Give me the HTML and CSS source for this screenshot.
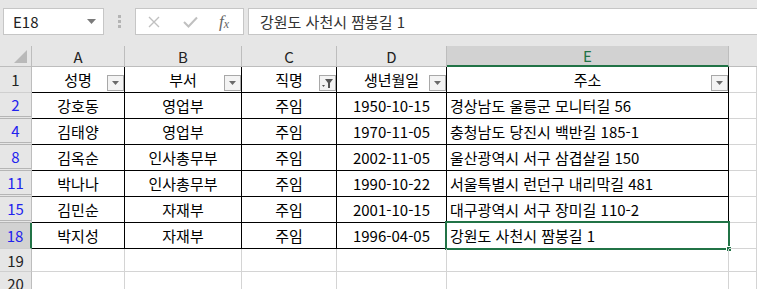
FILE: index.html
```html
<!DOCTYPE html>
<html lang="ko">

<head>
    <meta charset="UTF-8" />
    <meta name="viewport" content="width=device-width, initial-scale=1.0" />
    <title>Excel | 사원 목록</title>
    <link rel="stylesheet" href="styles.css">
</head>

<body>
    <div class="formula-bar">
        <div class="name-box">
            <span>E18</span>
            <svg class="caret" width="9" height="5" viewBox="0 0 9 5"><polygon points="0,0 9,0 4.5,5" fill="#7a7a7a" /></svg>
        </div>
        <div class="grip">
            <svg width="3" height="13" viewBox="0 0 3 13">
                <rect x="0" y="0" width="3" height="3" fill="#b4b4b4" />
                <rect x="0" y="5" width="3" height="3" fill="#b4b4b4" />
                <rect x="0" y="10" width="3" height="3" fill="#b4b4b4" />
            </svg>
        </div>
        <div class="fx-buttons">
            <svg class="btn-icon" width="12" height="12" viewBox="0 0 12 12"><path d="M1 1 L11 11 M11 1 L1 11" stroke="#c0c0c0" stroke-width="1.4" fill="none" /></svg>
            <svg class="btn-icon" width="15" height="12" viewBox="0 0 15 12"><path d="M1 6 L5.5 10.5 L14 1.5" stroke="#c0c0c0" stroke-width="2" fill="none" /></svg>
            <span class="fx">f<sub>x</sub></span>
        </div>
        <div class="formula-input">강원도 사천시 짬봉길 1</div>
    </div>

    <div class="sheet">
        <!-- column headers -->
        <div class="corner">
            <svg width="13" height="13" viewBox="0 0 13 13"><polygon points="13,0 13,13 0,13" fill="#b9b9b9" /></svg>
        </div>
        <div class="col-head">A</div>
        <div class="col-head">B</div>
        <div class="col-head">C</div>
        <div class="col-head">D</div>
        <div class="col-head active">E</div>
        <div class="col-head last"></div>

        <!-- row 1 -->
        <div class="row-head">1</div>
        <div class="cell head">성명<span class="filter"><svg width="7" height="4" viewBox="0 0 7 4"><polygon points="0,0 7,0 3.5,4" fill="#6a6a6a" /></svg></span></div>
        <div class="cell head">부서<span class="filter"><svg width="7" height="4" viewBox="0 0 7 4"><polygon points="0,0 7,0 3.5,4" fill="#6a6a6a" /></svg></span></div>
        <div class="cell head">직명<span class="filter"><svg width="11" height="10" viewBox="0 0 11 10"><polygon points="3,1 11,1 8,5 8,10 6,10 6,5" fill="#555" /><polygon points="0,7 3,7 1.5,9" fill="#555" /></svg></span></div>
        <div class="cell head">생년월일<span class="filter"><svg width="7" height="4" viewBox="0 0 7 4"><polygon points="0,0 7,0 3.5,4" fill="#6a6a6a" /></svg></span></div>
        <div class="cell head">주소<span class="filter"><svg width="7" height="4" viewBox="0 0 7 4"><polygon points="0,0 7,0 3.5,4" fill="#6a6a6a" /></svg></span></div>
        <div class="cell empty"></div>

        <!-- row 2 -->
        <div class="row-head filtered gap">2</div>
        <div class="cell">강호동</div>
        <div class="cell">영업부</div>
        <div class="cell">주임</div>
        <div class="cell">1950-10-15</div>
        <div class="cell left">경상남도 울릉군 모니터길 56</div>
        <div class="cell empty"></div>

        <!-- row 4 -->
        <div class="row-head filtered gap">4</div>
        <div class="cell">김태양</div>
        <div class="cell">영업부</div>
        <div class="cell">주임</div>
        <div class="cell">1970-11-05</div>
        <div class="cell left">충청남도 당진시 백반길 185-1</div>
        <div class="cell empty"></div>

        <!-- row 8 -->
        <div class="row-head filtered gap">8</div>
        <div class="cell">김옥순</div>
        <div class="cell">인사총무부</div>
        <div class="cell">주임</div>
        <div class="cell">2002-11-05</div>
        <div class="cell left">울산광역시 서구 삼겹살길 150</div>
        <div class="cell empty"></div>

        <!-- row 11 -->
        <div class="row-head filtered gap">11</div>
        <div class="cell">박나나</div>
        <div class="cell">인사총무부</div>
        <div class="cell">주임</div>
        <div class="cell">1990-10-22</div>
        <div class="cell left">서울특별시 런던구 내리막길 481</div>
        <div class="cell empty"></div>

        <!-- row 15 -->
        <div class="row-head filtered gap">15</div>
        <div class="cell">김민순</div>
        <div class="cell">자재부</div>
        <div class="cell">주임</div>
        <div class="cell">2001-10-15</div>
        <div class="cell left">대구광역시 서구 장미길 110-2</div>
        <div class="cell empty"></div>

        <!-- row 18 -->
        <div class="row-head filtered active">18</div>
        <div class="cell">박지성</div>
        <div class="cell">자재부</div>
        <div class="cell">주임</div>
        <div class="cell">1996-04-05</div>
        <div class="cell left selected">강원도 사천시 짬봉길 1<span class="selection"><span class="handle"></span></span></div>
        <div class="cell empty"></div>

        <!-- row 19 -->
        <div class="row-head">19</div>
        <div class="cell empty"></div>
        <div class="cell empty"></div>
        <div class="cell empty"></div>
        <div class="cell empty"></div>
        <div class="cell empty"></div>
        <div class="cell empty"></div>

        <!-- row 20 -->
        <div class="row-head">20</div>
        <div class="cell empty"></div>
        <div class="cell empty"></div>
        <div class="cell empty"></div>
        <div class="cell empty"></div>
        <div class="cell empty"></div>
        <div class="cell empty"></div>
    </div>
</body>

</html>
```

FILE: styles.css
```css
* {
    margin: 0;
    padding: 0;
    box-sizing: border-box;
}

body {
    width: 757px;
    height: 289px;
    overflow: hidden;
    background-color: #fff;
    font-family: "Noto Sans CJK KR", "Malgun Gothic", sans-serif;
    font-size: 15px;
    color: #000;
}

/* formula bar */

.formula-bar {
    height: 46px;
    background-color: #e6e6e6;
    display: flex;
    align-items: flex-start;
    padding: 8px 0 0 3px;
}

.name-box,
.fx-buttons,
.formula-input {
    height: 27px;
    background-color: #fff;
    border: 1px solid #c6c6c6;
    display: flex;
    align-items: center;
}

.name-box {
    width: 101px;
    justify-content: space-between;
    padding: 0 7px 0 9px;
    color: #222;
}

.grip {
    width: 31px;
    height: 27px;
    display: flex;
    align-items: center;
    justify-content: center;
}

.fx-buttons {
    width: 109px;
    padding-left: 12px;
    gap: 23px;
}

.btn-icon {
    flex-shrink: 0;
}

.fx {
    font-family: "Liberation Serif", serif;
    font-style: italic;
    font-size: 17px;
    color: #666;
    margin-left: -2px;
}

.fx sub {
    font-size: 12px;
    vertical-align: -1px;
}

.formula-input {
    flex: 1;
    margin-left: 4px;
    padding-left: 11px;
    color: #333;
    border-right: none;
}

/* sheet grid */

.sheet {
    display: grid;
    grid-template-columns: 32px 93px 117px 95px 110px 282px 28px;
    grid-template-rows: 21px repeat(7, 26px) 23px 23px;
}

.corner {
    background-color: #e6e6e6;
    border-right: 1px solid #bdbdbd;
    border-bottom: 1px solid #bdbdbd;
    display: flex;
    align-items: flex-end;
    justify-content: flex-end;
    padding: 0 4px 3px 0;
}

.col-head {
    background-color: #e6e6e6;
    border-right: 1px solid #bdbdbd;
    border-bottom: 1px solid #bdbdbd;
    display: flex;
    align-items: center;
    justify-content: center;
    color: #222;
}

.col-head.active {
    background-color: #d2d2d2;
    border-bottom: 2px solid #217346;
    color: #217346;
}

.col-head.last {
    border-right: none;
}

.row-head {
    background-color: #e6e6e6;
    border-right: 1px solid #bdbdbd;
    border-bottom: 1px solid #cfcfcf;
    display: flex;
    align-items: center;
    justify-content: center;
    color: #222;
}

.row-head.filtered {
    color: #2222ee;
}

.row-head.gap {
    border-bottom: 3px double #b5b5b5;
}

.row-head.active {
    background-color: #d2d2d2;
    border-right: 2px solid #217346;
}

.cell {
    position: relative;
    border-right: 1px solid #000;
    border-bottom: 1px solid #000;
    display: flex;
    align-items: center;
    justify-content: center;
    white-space: nowrap;
}

.cell.left {
    justify-content: flex-start;
    padding-left: 3px;
}

.cell.empty {
    border-right: 1px solid #d4d4d4;
    border-bottom: 1px solid #d4d4d4;
}

.filter {
    position: absolute;
    right: 0;
    bottom: 1px;
    width: 17px;
    height: 16px;
    background-color: #f3f3f3;
    border: 1px solid #a8a8a8;
    display: flex;
    align-items: center;
    justify-content: center;
}

.selection {
    position: absolute;
    top: -2px;
    left: -2px;
    right: -2px;
    bottom: -2px;
    border: 2px solid #217346;
}

.handle {
    position: absolute;
    right: -4px;
    bottom: -4px;
    width: 6px;
    height: 6px;
    background-color: #217346;
    border: 1px solid #fff;
}
```
